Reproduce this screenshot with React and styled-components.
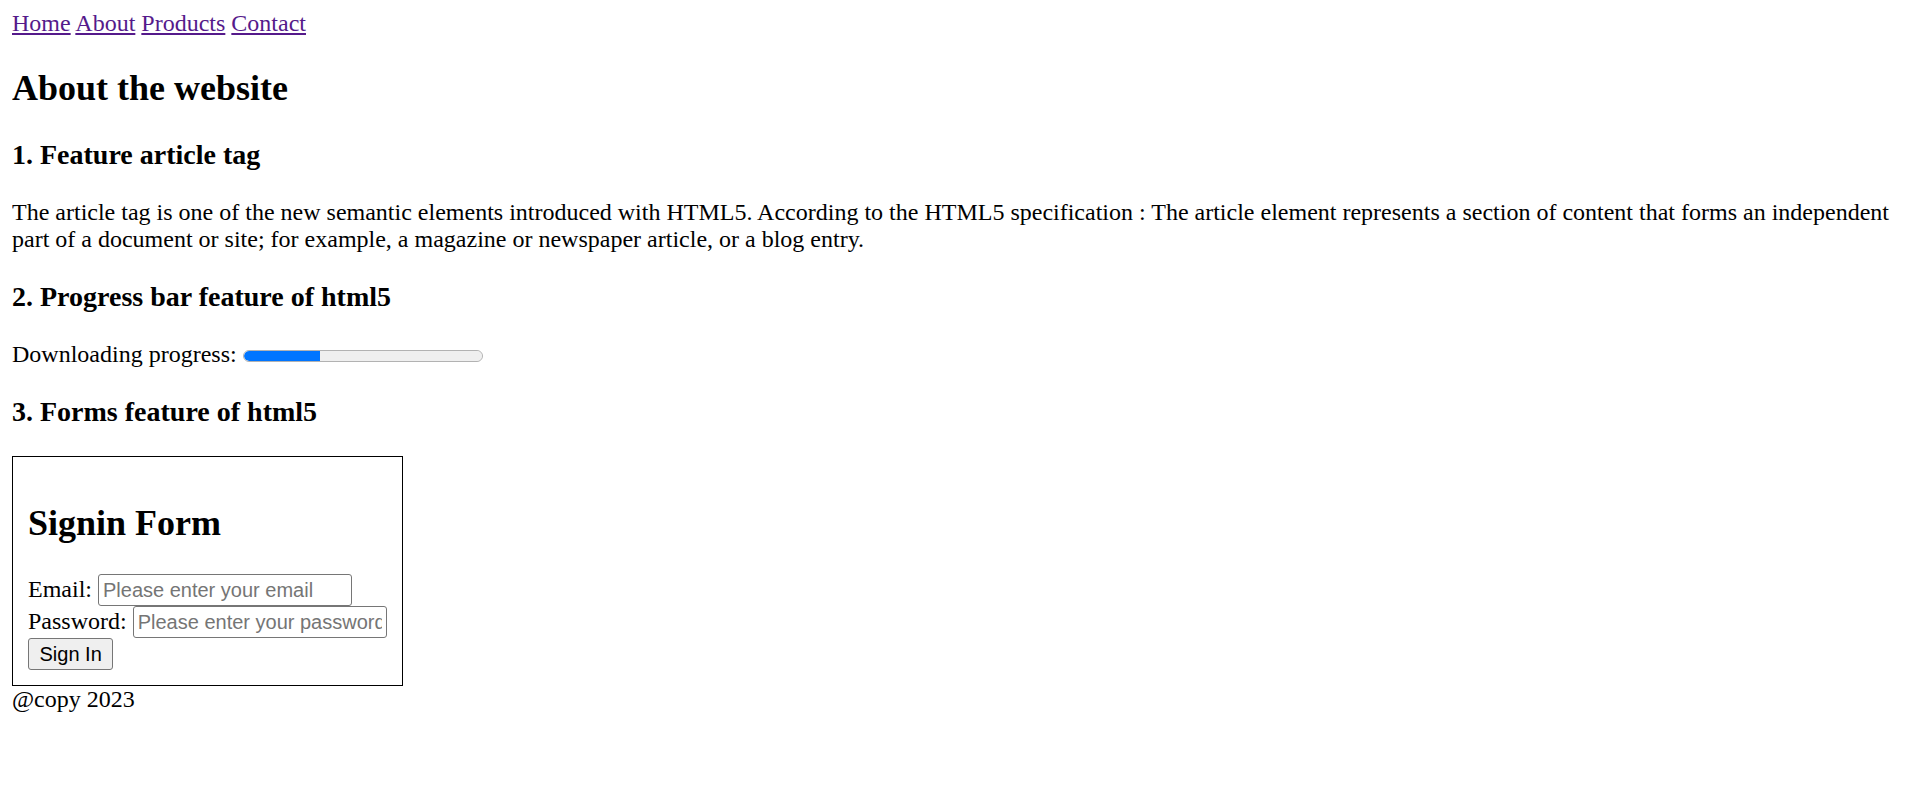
import React from 'react'
import styled, { createGlobalStyle } from 'styled-components'

const GlobalStyle = createGlobalStyle`
  body {
    margin: 10px 12px 12px;
    font-family: "Liberation Serif", "Times New Roman", serif;
    font-size: 24px;
    color: #000;
    background: #fff;
  }
`

const Nav = styled.nav`
  display: block;
`

const NavLink = styled.a`
  color: #551a8b;
  text-decoration: underline;
  cursor: pointer;
`

const Title = styled.h2`
  font-size: 36px;
  font-weight: bold;
  margin: 30px 0;
`

const SubTitle = styled.h3`
  font-size: 28px;
  font-weight: bold;
  margin: 28px 0;
`

const Text = styled.p`
  margin: 24px 0;
`

const Progress = styled.progress`
  appearance: none;
  -webkit-appearance: none;
  box-sizing: border-box;
  width: 240px;
  height: 12px;
  margin: 0;
  vertical-align: baseline;
  border: 1px solid #b2b2b2;
  border-radius: 6px;
  background: #efefef;
  overflow: hidden;

  &::-webkit-progress-bar {
    background: #efefef;
    border-radius: 6px;
  }
  &::-webkit-progress-value {
    background: #0075ff;
    border-radius: 6px 0 0 6px;
  }
`

const FormBox = styled.form`
  width: fit-content;
  border: 1px solid #000;
  padding: 15px;
`

const FormTitle = styled.h2`
  font-size: 36px;
  font-weight: bold;
  margin: 30px 0;
`

const Input = styled.input`
  font-family: "Liberation Sans", Arial, sans-serif;
  font-size: 20px;
  width: 254px;
  height: 32px;
  box-sizing: border-box;
  padding: 1px 4px;
  border: 1px solid #767676;
  border-radius: 3px;
  color: #000;
  background: #fff;

  &::placeholder {
    color: #757575;
  }
`

const Button = styled.button`
  font-family: "Liberation Sans", Arial, sans-serif;
  font-size: 20px;
  height: 32px;
  box-sizing: border-box;
  padding: 1px 10.5px;
  border: 1px solid #767676;
  border-radius: 3px;
  background: #efefef;
  color: #000;
`

const Footer = styled.footer`
  display: block;
`

const App = () => {
  return (
    <>
      <GlobalStyle />
      <header>
        <Nav>
          <NavLink>Home</NavLink> <NavLink>About</NavLink>{' '}
          <NavLink>Products</NavLink> <NavLink>Contact</NavLink>
        </Nav>
      </header>
      <main>
        <Title>About the website</Title>
        <article>
          <SubTitle>1. Feature article tag</SubTitle>
          <Text>
            The article tag is one of the new semantic elements introduced with HTML5. According to the HTML5
            specification : The article element represents a section of content that forms an independent part of a
            document or site; for example, a magazine or newspaper article, or a blog entry.
          </Text>
        </article>
        <section>
          <SubTitle>2. Progress bar feature of html5</SubTitle>
          <Text>
            Downloading progress: <Progress value={32} max={100} />
          </Text>
        </section>
        <section>
          <SubTitle>3. Forms feature of html5</SubTitle>
          <FormBox onSubmit={(e) => e.preventDefault()}>
            <FormTitle>Signin Form</FormTitle>
            Email: <Input type="email" placeholder="Please enter your email" />
            <br />
            Password: <Input type="password" placeholder="Please enter your password" />
            <br />
            <Button type="submit">Sign In</Button>
          </FormBox>
        </section>
      </main>
      <Footer>@copy 2023</Footer>
    </>
  )
}

export default App
